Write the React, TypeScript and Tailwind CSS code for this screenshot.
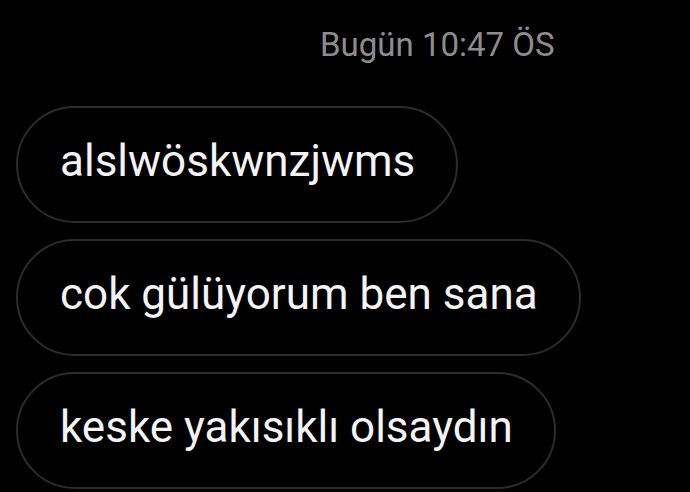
import React from "react";

const messages = ["alslwöskwnzjwms", "cok gülüyorum ben sana", "keske yakısıklı olsaydın"];

export default function App() {
  return (
    <div
      className="w-[690px] h-[492px] bg-black overflow-hidden flex flex-col"
      style={{ fontFamily: "Roboto, 'Noto Sans', sans-serif" }}
    >
      <div className="h-[106px] pl-[320px] pt-[26px] text-[33px] leading-[38px] text-[#8d8d8d]">
        Bugün 10:47 ÖS
      </div>
      <div className="flex flex-col items-start gap-[16px] pl-[16px]">
        {messages.map((m) => (
          <div
            key={m}
            className="h-[117px] flex items-center pl-[42px] pr-[41px] rounded-full border-2 border-[#2c2c2c] text-[44px] text-[#f4f4f4] leading-none"
          >
            <span className="-mt-[7px]">{m}</span>
          </div>
        ))}
      </div>
    </div>
  );
}
